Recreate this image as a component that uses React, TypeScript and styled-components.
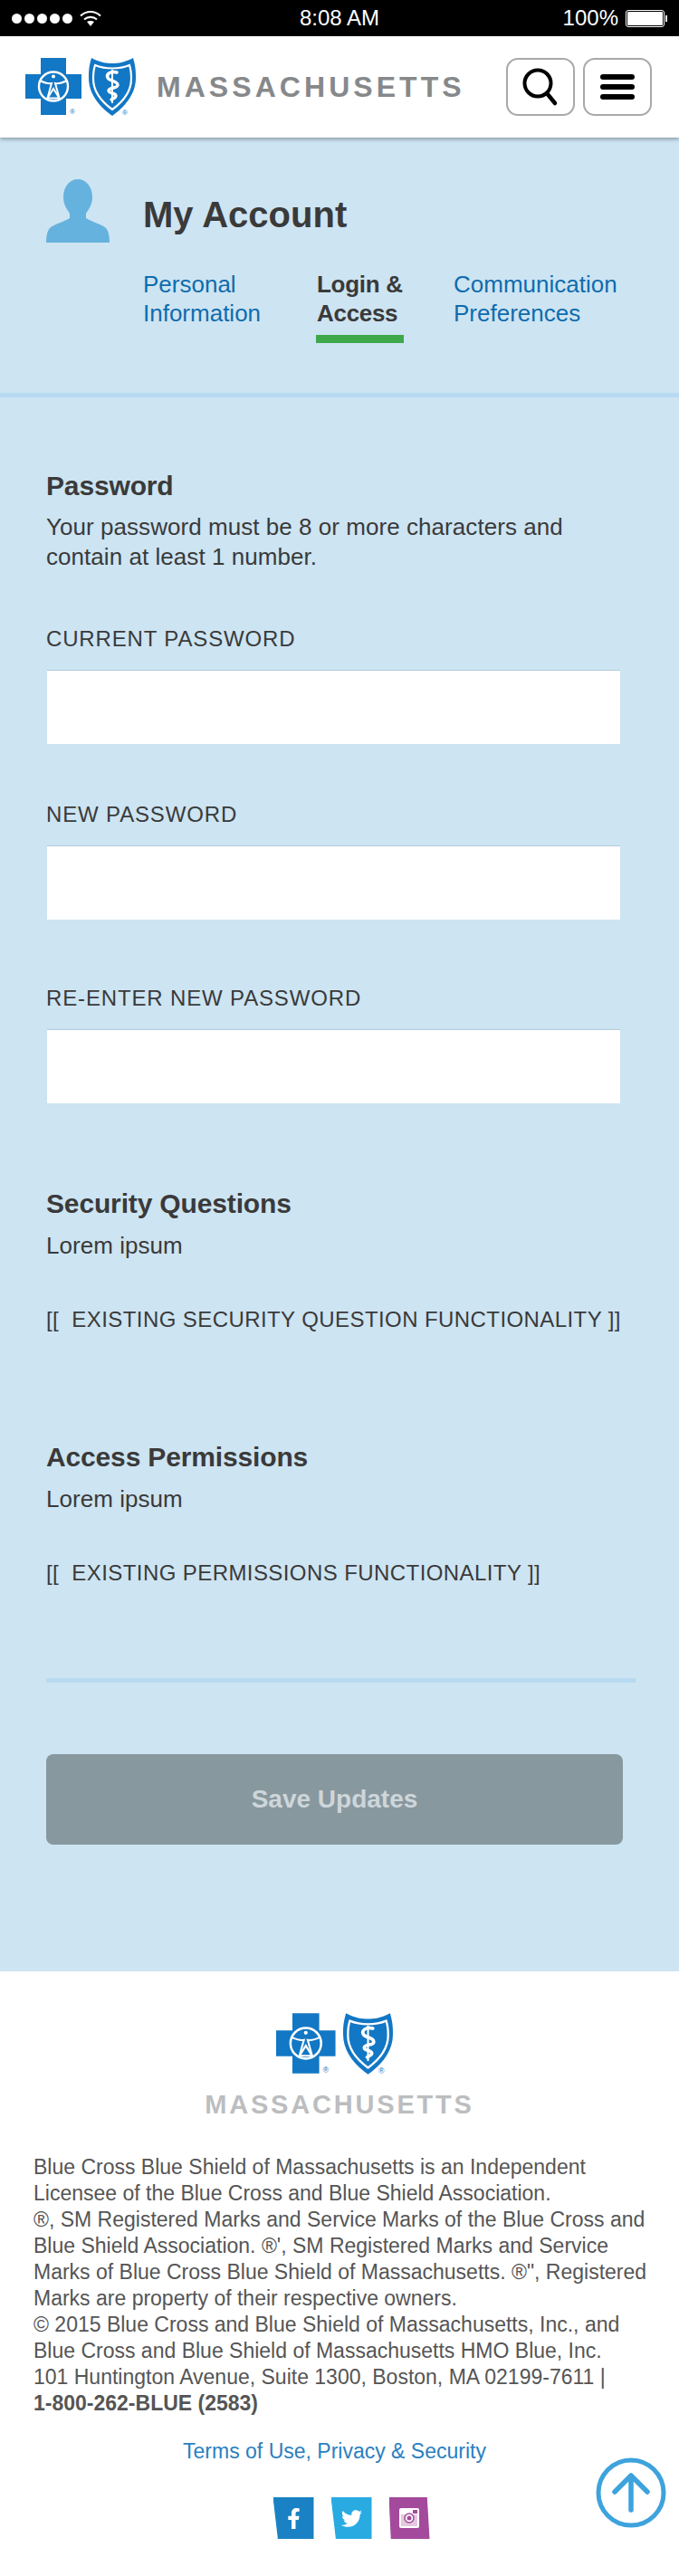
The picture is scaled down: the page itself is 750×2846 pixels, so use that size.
import React from "react";
import styled, { createGlobalStyle } from "styled-components";
import { FaFacebookF, FaTwitter } from "react-icons/fa";

// ______________________________________________________
// styles

const GlobalStyle = createGlobalStyle`
  html, body {
    margin: 0;
    padding: 0;
    background: #fff;
  }
  * {
    box-sizing: border-box;
  }
  body {
    font-family: "Liberation Sans", Arial, sans-serif;
    color: #3a3a3a;
  }
`;

const Page = styled.div`
  width: 750px;
  height: 2846px;
  display: flex;
  flex-direction: column;
  overflow: hidden;
`;

const StatusBar = styled.div`
  height: 40px;
  background: #000;
  color: #fff;
  display: grid;
  grid-template-columns: 1fr auto 1fr;
  align-items: center;
  padding: 0 13px;
  font-size: 24px;
`;

const Signal = styled.div`
  display: flex;
  align-items: center;
  gap: 3px;
`;

const Dot = styled.span`
  width: 11px;
  height: 11px;
  border-radius: 50%;
  background: #fff;
`;

const WifiIcon = styled.svg`
  width: 24px;
  height: 18px;
  margin-left: 5px;
`;

const Clock = styled.div`
  font-size: 24px;
`;

const BatteryRow = styled.div`
  display: flex;
  justify-content: flex-end;
  align-items: center;
  gap: 8px;
`;

const Battery = styled.span`
  position: relative;
  width: 43px;
  height: 19px;
  border: 1px solid #fff;
  border-radius: 3px;
  padding: 1px;
  margin-right: 3px;
  &::before {
    content: "";
    display: block;
    width: 100%;
    height: 100%;
    background: #fff;
    border-radius: 1px;
  }
  &::after {
    content: "";
    position: absolute;
    right: -4px;
    top: 5px;
    width: 2px;
    height: 7px;
    background: #fff;
  }
`;

const Header = styled.header`
  position: relative;
  z-index: 1;
  height: 112px;
  background: #fff;
  display: flex;
  align-items: center;
  padding: 0 30px 0 28px;
  box-shadow: 0 2px 4px rgba(60, 70, 80, 0.45);
`;

const LogoSvg = styled.svg<{ $w: number; $h: number }>`
  width: ${(p) => p.$w}px;
  height: ${(p) => p.$h}px;
  flex: none;
  display: block;
`;

const HeaderWord = styled.div`
  margin-left: 23px;
  font-size: 32px;
  line-height: 32px;
  font-weight: 700;
  letter-spacing: 4.05px;
  color: #87888a;
  flex: 1;
`;

const IconButton = styled.button`
  width: 76px;
  height: 64px;
  margin-left: 9px;
  padding: 0;
  background: #fff;
  border: 2px solid #a9a9a9;
  border-radius: 13px;
  display: flex;
  flex-direction: column;
  align-items: center;
  justify-content: center;
  gap: 5px;
`;

const Bar = styled.span`
  width: 38px;
  height: 6px;
  border-radius: 3px;
  background: #000;
`;

const Main = styled.main`
  background: #cde4f2;
  height: 2026px;
  display: flex;
  flex-direction: column;
`;

const AccountHead = styled.div`
  padding: 46px 51px 55px;
`;

const TitleRow = styled.div`
  display: flex;
  align-items: flex-start;
  gap: 37px;
`;

const Avatar = styled.svg`
  width: 70px;
  height: 70px;
  flex: none;
`;

const Title = styled.h1`
  margin: 16px 0 0;
  font-size: 40px;
  line-height: 46px;
  font-weight: 700;
`;

const Tabs = styled.nav`
  margin: 30px 0 0 107px;
  display: grid;
  grid-template-columns: 191px 152px auto;
  font-size: 26px;
  line-height: 32px;
`;

const Tab = styled.a<{ $active?: boolean }>`
  color: ${(p) => (p.$active ? "#3a3a3a" : "#0f6cae")};
  font-weight: ${(p) => (p.$active ? 700 : 400)};
  justify-self: start;
  ${(p) => p.$active && "padding: 0 1px 8px; border-bottom: 9px solid #3fa84a; letter-spacing: -0.3px;"}
`;

const Rule = styled.div<{ $inset?: boolean }>`
  height: 5px;
  flex: none;
  background: #b8daf1;
  margin: ${(p) => (p.$inset ? "101px 48px 0 51px" : "0")};
`;

const Form = styled.form`
  padding: 0 51px;
`;

const SectionTitle = styled.h2<{ $top: number }>`
  margin: ${(p) => p.$top}px 0 0;
  font-size: 30px;
  line-height: 36px;
  font-weight: 700;
  letter-spacing: -0.15px;
  color: #3a3a3a;
`;

const Copy = styled.p<{ $top: number }>`
  margin: ${(p) => p.$top}px 0 0;
  font-size: 26px;
  line-height: 33px;
  letter-spacing: 0.05px;
`;

const FieldLabel = styled.label<{ $top: number }>`
  display: block;
  margin-top: ${(p) => p.$top}px;
  font-size: 24px;
  line-height: 30px;
  letter-spacing: 0.85px;
`;

const Input = styled.input`
  display: block;
  width: 633px;
  height: 82px;
  margin: 19px 0 0 1px;
  padding: 0 12px;
  background: #fff;
  border: 0;
  border-top: 1px solid #b2c9dc;
  border-radius: 0;
  outline: none;
`;

const Existing = styled.p`
  margin: 50px 0 0;
  font-size: 24px;
  line-height: 30px;
  letter-spacing: 0.42px;
  white-space: pre;
`;

const SaveButton = styled.button`
  display: block;
  width: 637px;
  height: 100px;
  margin: 79px 0 0 51px;
  border: 0;
  border-radius: 8px;
  background: #88989f;
  color: #ced6da;
  font-family: inherit;
  font-size: 28px;
  font-weight: 700;
`;

const Footer = styled.footer`
  position: relative;
  flex: 1;
  background: #fff;
  padding: 46px 37px 0;
  display: flex;
  flex-direction: column;
  align-items: stretch;
`;

const FooterLogo = styled.div`
  display: flex;
  justify-content: center;
  margin-right: 11px;
`;

const FooterWord = styled.div`
  margin-top: 19px;
  text-align: center;
  font-size: 29px;
  line-height: 29px;
  font-weight: 700;
  letter-spacing: 2.8px;
  color: #bcbdbf;
`;

const Legal = styled.p`
  margin: 40px 0 0;
  font-size: 23px;
  line-height: 29px;
  color: #555;
  white-space: nowrap;
`;

const Terms = styled.a`
  display: block;
  margin: 24px 11px 0 0;
  text-align: center;
  font-size: 23px;
  line-height: 29px;
  color: #2a80c0;
`;

const Socials = styled.div`
  margin: 36px 0 0 26px;
  display: flex;
  justify-content: center;
  gap: 19px;
`;

const Social = styled.a<{ $bg: string; $shape: string }>`
  width: 45px;
  height: 46px;
  background: ${(p) => p.$bg};
  color: #fff;
  font-size: 23px;
  display: flex;
  align-items: center;
  justify-content: center;
  clip-path: ${(p) => p.$shape};
`;

const BackToTop = styled.a`
  position: absolute;
  right: 14px;
  top: 537px;
  width: 78px;
  height: 78px;
`;

const TopIcon = styled.svg`
  width: 100%;
  height: 100%;
  display: block;
`;

// ______________________________________________________
// parts

const Logo: React.FC<{ w: number; h: number }> = ({ w, h }) => (
  <LogoSvg $w={w} $h={h} viewBox="0 0 122 64">
    <path d="M17 0H45V18H62V45H45V63H17V45H0V18H17Z" fill="#1277c4" />
    <circle cx="31" cy="31.5" r="16" fill="none" stroke="#fff" strokeWidth="2.4" />
    <circle cx="31" cy="20.5" r="2" fill="#fff" />
    <path d="M16 25Q24 29 29 28L24 46M46 25Q38 29 33 28L38 46" fill="none" stroke="#fff" strokeWidth="2" />
    <path d="M31 34L24.5 44.5H37.5Z" fill="none" stroke="#fff" strokeWidth="2" />
    <text x="49" y="62" fontSize="8" fill="#1277c4" fontFamily="Liberation Sans">®</text>
    <g transform="translate(70 0)">
      <path d="M3 0C12 5 20 6 26 6C32 6 40 5 49 0C52 10 52 16 52 22C52 40 40 54 26 64C12 54 0 40 0 22C0 16 0 10 3 0Z" fill="#1277c4" />
      <path d="M7 8C14 11 20 11.5 26 11.5C32 11.5 38 11 45 8C47 14 47 18 47 23C47 37 37 49 26 57C15 49 5 37 5 23C5 18 5 14 7 8Z" fill="none" stroke="#fff" strokeWidth="2.2" />
      <path d="M26 13V50" stroke="#fff" strokeWidth="2" />
      <path d="M31 16C24 14 19 18 21 22C23 26 32 25 32 30C32 34 23 32 22 36C22 40 30 38 30 42C30 44 27 45 25 46" fill="none" stroke="#fff" strokeWidth="3.4" strokeLinecap="round" />
      <text x="37" y="63" fontSize="8" fill="#1277c4" fontFamily="Liberation Sans">®</text>
    </g>
  </LogoSvg>
);

// ______________________________________________________
// page

const App: React.FC = () => (
  <Page>
    <GlobalStyle />
    <StatusBar>
      <Signal>
        <Dot />
        <Dot />
        <Dot />
        <Dot />
        <Dot />
        <WifiIcon viewBox="0 0 24 18">
          <path d="M1 6.5C7.5 0.5 16.5 0.5 23 6.5" fill="none" stroke="#fff" strokeWidth="2.2" />
          <path d="M5 10.5C9 7 15 7 19 10.5" fill="none" stroke="#fff" strokeWidth="2.2" />
          <path d="M8 13C10.5 11.5 13.5 11.5 16 13L12 18Z" fill="#fff" />
        </WifiIcon>
      </Signal>
      <Clock>8:08 AM</Clock>
      <BatteryRow>
        100%
        <Battery />
      </BatteryRow>
    </StatusBar>

    <Header>
      <Logo w={122} h={64} />
      <HeaderWord>MASSACHUSETTS</HeaderWord>
      <IconButton aria-label="Search">
        <svg width="44" height="46" viewBox="0 0 44 46">
          <circle cx="19" cy="19" r="14.5" fill="none" stroke="#000" strokeWidth="4" />
          <path d="M29 30L38 41" stroke="#000" strokeWidth="4.5" strokeLinecap="round" />
        </svg>
      </IconButton>
      <IconButton aria-label="Menu">
        <Bar />
        <Bar />
        <Bar />
      </IconButton>
    </Header>

    <Main>
      <AccountHead>
        <TitleRow>
          <Avatar viewBox="0 0 70 70">
            <path
              d="M35 0C44 0 51 8 51 20C51 28 47 33 44 38V43C50 47 62 50 66 54C69 57 70 64 70 70H0C0 64 1 57 4 54C8 50 20 47 26 43V38C23 33 19 28 19 20C19 8 26 0 35 0Z"
              fill="#65b2de"
            />
          </Avatar>
          <Title>My Account</Title>
        </TitleRow>
        <Tabs>
          <Tab>
            Personal
            <br />
            Information
          </Tab>
          <Tab $active>
            Login &amp;
            <br />
            Access
          </Tab>
          <Tab>
            Communication
            <br />
            Preferences
          </Tab>
        </Tabs>
      </AccountHead>
      <Rule />

      <Form>
        <SectionTitle $top={80}>Password</SectionTitle>
        <Copy $top={11}>
          Your password must be 8 or more characters and
          <br />
          contain at least 1 number.
        </Copy>
        <FieldLabel $top={59}>CURRENT PASSWORD</FieldLabel>
        <Input type="password" />
        <FieldLabel $top={63}>NEW PASSWORD</FieldLabel>
        <Input type="password" />
        <FieldLabel $top={72}>RE-ENTER NEW PASSWORD</FieldLabel>
        <Input type="password" />

        <SectionTitle $top={93}>Security Questions</SectionTitle>
        <Copy $top={12}>Lorem ipsum</Copy>
        <Existing>{"[[  EXISTING SECURITY QUESTION FUNCTIONALITY ]]"}</Existing>

        <SectionTitle $top={119}>Access Permissions</SectionTitle>
        <Copy $top={12}>Lorem ipsum</Copy>
        <Existing>{"[[  EXISTING PERMISSIONS FUNCTIONALITY ]]"}</Existing>
      </Form>

      <Rule $inset />
      <SaveButton type="button">Save Updates</SaveButton>
    </Main>

    <Footer>
      <FooterLogo>
        <Logo w={129} h={68} />
      </FooterLogo>
      <FooterWord>MASSACHUSETTS</FooterWord>
      <Legal>
        Blue Cross Blue Shield of Massachusetts is an Independent
        <br />
        Licensee of the Blue Cross and Blue Shield Association.
        <br />
        ®, SM Registered Marks and Service Marks of the Blue Cross and
        <br />
        Blue Shield Association. ®', SM Registered Marks and Service
        <br />
        Marks of Blue Cross Blue Shield of Massachusetts. ®", Registered
        <br />
        Marks are property of their respective owners.
        <br />
        © 2015 Blue Cross and Blue Shield of Massachusetts, Inc., and
        <br />
        Blue Cross and Blue Shield of Massachusetts HMO Blue, Inc.
        <br />
        101 Huntington Avenue, Suite 1300, Boston, MA 02199-7611 |
        <br />
        <strong>1-800-262-BLUE (2583)</strong>
      </Legal>
      <Terms>Terms of Use, Privacy &amp; Security</Terms>
      <Socials>
        <Social $bg="#1a82c4" $shape="polygon(0 0, 100% 0, 100% 100%, 12% 100%)">
          <FaFacebookF />
        </Social>
        <Social $bg="#29abe2" $shape="polygon(0 0, 100% 0, 100% 100%, 12% 100%)">
          <FaTwitter />
        </Social>
        <Social $bg="#a44a9c" $shape="polygon(0 0, 94% 0, 100% 100%, 5% 100%)">
          <svg width="24" height="24" viewBox="0 0 24 24">
            <rect x="1" y="1" width="22" height="22" rx="2" fill="#fff" />
            <rect x="3" y="8" width="18" height="13" fill="#e3c8e0" />
            <rect x="16" y="3" width="5" height="4" fill="#a44a9c" />
            <circle cx="12" cy="12" r="5" fill="#fff" stroke="#a44a9c" strokeWidth="1.5" />
            <circle cx="12" cy="12" r="2.5" fill="#a44a9c" />
          </svg>
        </Social>
      </Socials>
      <BackToTop aria-label="Back to top">
        <TopIcon viewBox="0 0 78 78">
          <circle cx="39" cy="39" r="36" fill="none" stroke="#3ea3dc" strokeWidth="5" />
          <path d="M39 58V21M21 38L39 20L57 38" fill="none" stroke="#3ea3dc" strokeWidth="5.5" strokeLinecap="round" strokeLinejoin="round" />
        </TopIcon>
      </BackToTop>
    </Footer>
  </Page>
);

export default App;
